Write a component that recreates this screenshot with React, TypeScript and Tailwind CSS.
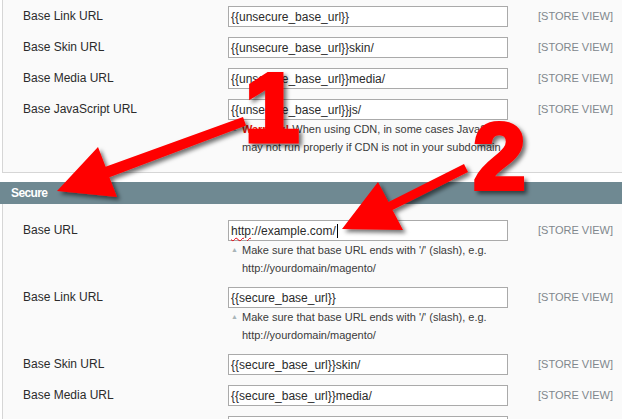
import type { ReactNode } from 'react';

type Row = {
    label: string;
    value: ReactNode;
    hint?: ReactNode[];
};

const topRows: Row[] = [
    { label: 'Base Link URL', value: '{{unsecure_base_url}}' },
    { label: 'Base Skin URL', value: '{{unsecure_base_url}}skin/' },
    { label: 'Base Media URL', value: '{{unsecure_base_url}}media/' },
    {
        label: 'Base JavaScript URL',
        value: '{{unsecure_base_url}}js/',
        hint: [
            <>
                <span className="font-bold text-[#e41101]">Warning!</span> When using CDN, in some cases JavaScript
            </>,
            'may not run properly if CDN is not in your subdomain',
        ],
    },
];

const slashHint = ["Make sure that base URL ends with '/' (slash), e.g.", 'http://yourdomain/magento/'];

const secureRows: Row[] = [
    {
        label: 'Base URL',
        value: (
            <>
                <span className="underline decoration-wavy decoration-red-600 decoration-1 underline-offset-2">http</span>
                ://example.com/
                <span className="ml-[1px] inline-block h-[14px] w-[1px] bg-black align-[-3px]" />
            </>
        ),
        hint: slashHint,
    },
    { label: 'Base Link URL', value: '{{secure_base_url}}', hint: slashHint },
    { label: 'Base Skin URL', value: '{{secure_base_url}}skin/' },
    { label: 'Base Media URL', value: '{{secure_base_url}}media/' },
    { label: 'Base JavaScript URL', value: '{{secure_base_url}}js/' },
];

function ConfigRow({ row }: { row: Row }) {
    return (
        <div className="flex">
            <div className="w-[225px] shrink-0 pl-[20px] leading-[20px] text-[#2b2b2b]">{row.label}</div>
            <div className="w-[280px] shrink-0">
                <div className="flex h-[21px] items-center border border-[#aaaaaa] bg-white px-[2px] text-[#2b2b2b]">
                    <span className="whitespace-nowrap">{row.value}</span>
                </div>
                {row.hint && (
                    <div className="text-[11px] leading-[18px] text-[#3a3a3a]">
                        {row.hint.map((line, i) => (
                            <div key={i} className="flex items-center whitespace-nowrap">
                                <span className="w-[14px] shrink-0 pl-[3px] text-[7px] text-[#a9b4b8]">{i === 0 ? '▲' : ''}</span>
                                <span>{line}</span>
                            </div>
                        ))}
                    </div>
                )}
            </div>
            <div className="ml-[30px] shrink-0 text-[11px] leading-[20px] text-[#80878d]">[STORE VIEW]</div>
        </div>
    );
}

function Annotations() {
    return (
        <svg className="pointer-events-none absolute left-0 top-0" width="622" height="419" viewBox="0 0 622 419">
            <defs>
                <filter id="shade" x="-20%" y="-20%" width="140%" height="140%">
                    <feDropShadow dx="3" dy="3" stdDeviation="2" floodColor="#000" floodOpacity="0.55" />
                </filter>
            </defs>
            <g filter="url(#shade)" fill="#ff0000">
                <polygon points="57,191 98,147 105.6,166.8 243,117 246,125.5 109.4,177.2 117,197" />
                <polygon points="342,229 378,182 388.5,202 464,164 468,172 392.5,210 403,230" />
                <text
                    x="245"
                    y="141"
                    fontFamily="'Liberation Sans', Arial, sans-serif"
                    fontWeight="700"
                    fontSize="97"
                    stroke="#ff0000"
                    strokeWidth="5"
                >
                    1
                </text>
                <text
                    x="473"
                    y="189"
                    fontFamily="'Liberation Sans', Arial, sans-serif"
                    fontWeight="700"
                    fontSize="95"
                    stroke="#ff0000"
                    strokeWidth="4"
                >
                    2
                </text>
            </g>
        </svg>
    );
}

export default function App() {
    return (
        <div className="relative h-[419px] w-[622px] overflow-hidden bg-white font-['Liberation_Sans',Arial,sans-serif] text-[12px]">
            {/* Unsecure panel (tail) */}
            <div className="ml-[2px] w-[640px] border-b border-l border-[#d6d6d6] bg-[#fafafa] pb-[16px] pt-[6px]">
                <div className="flex flex-col gap-[10px]">
                    {topRows.map((row) => (
                        <ConfigRow key={row.label} row={row} />
                    ))}
                </div>
            </div>

            {/* Secure section */}
            <div className="mt-[9px] w-[640px]">
                <div className="flex h-[22px] items-center bg-[#6f8992] pl-[11px] text-[12px] font-bold tracking-[-0.6px] text-white">
                    Secure
                </div>
                <div className="ml-[2px] border-l border-[#d6d6d6] bg-[#fafafa] pb-[20px] pt-[16px]">
                    <div className="flex flex-col gap-[10px]">
                        {secureRows.map((row) => (
                            <ConfigRow key={row.label} row={row} />
                        ))}
                    </div>
                </div>
            </div>

            <Annotations />
        </div>
    );
}
